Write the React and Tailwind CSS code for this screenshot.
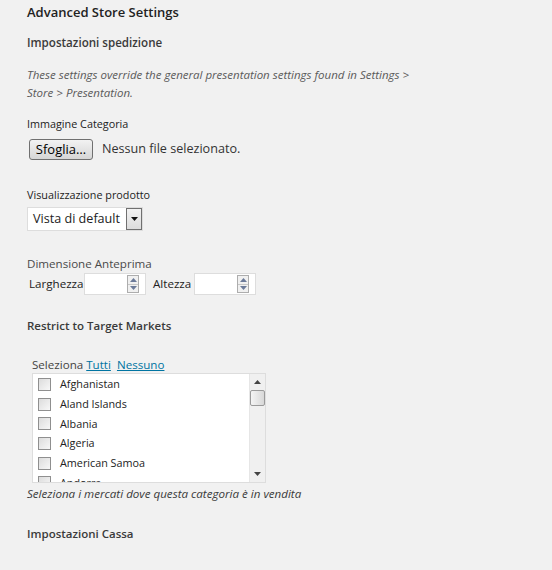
import React from 'react';

const countries = ['Afghanistan', 'Aland Islands', 'Albania', 'Algeria', 'American Samoa', 'Andorra'];

const Spinner = () => (
  <div className="flex flex-col w-[12px] h-[18px] border border-[#adadad] bg-[#f0f0f0]">
    <div className="flex-1 flex items-center justify-center border-b border-[#c8c8c8]">
      <svg width="7" height="4" viewBox="0 0 7 4"><path d="M0 4 L3.5 0 L7 4 Z" fill="#6b7a99" /></svg>
    </div>
    <div className="flex-1 flex items-center justify-center">
      <svg width="7" height="4" viewBox="0 0 7 4"><path d="M0 0 L3.5 4 L7 0 Z" fill="#6b7a99" /></svg>
    </div>
  </div>
);

const NumberBox = () => (
  <div className="w-[62px] h-[22px] bg-white border border-[#dddddd] flex items-center justify-end pr-[6px] shrink-0">
    <Spinner />
  </div>
);

const App = () => {
  return (
    <div className="w-[552px] h-[570px] bg-[#f1f1f1] pl-[27px] pt-[2px] text-[#444] overflow-hidden" style={{ fontFamily: '"Open Sans", sans-serif' }}>
      <h2 className="h-[20px] text-[13px] font-semibold text-[#222] leading-[20px]">Advanced Store Settings</h2>

      <h3 className="mt-[11px] h-[20px] text-[11.6px] font-semibold text-[#3a3a3a] leading-[20px]">Impostazioni spedizione</h3>
      <p className="mt-[13px] text-[11.5px] italic text-[#5a5a5a] leading-[18px] w-[395px]">
        These settings override the general presentation settings found in Settings &gt; Store &gt; Presentation.
      </p>

      <div className="mt-[14px] h-[16px] text-[10.8px] text-[#222] leading-[16px]">Immagine Categoria</div>
      <div className="mt-[7px] flex items-center h-[21px]">
        <div className="ml-[2px] w-[64px] h-[21px] rounded-[3px] border border-[#707070] bg-gradient-to-b from-[#f2f2f2] to-[#d6d6d6] flex items-center justify-center text-[13px] text-black whitespace-nowrap">Sfoglia…</div>
        <span className="ml-[9px] text-[12.6px] text-[#333] whitespace-nowrap">Nessun file selezionato.</span>
      </div>

      <div className="mt-[27px] h-[16px] text-[10.8px] text-[#222] leading-[16px]">Visualizzazione prodotto</div>
      <div className="mt-[4px] w-[116px] h-[24px] bg-white border border-[#dddddd] flex items-center">
        <span className="flex-1 pl-[5px] text-[12.6px] text-[#222] whitespace-nowrap">Vista di default</span>
        <div className="w-[16px] h-[22px] border border-[#707070] bg-gradient-to-b from-[#f2f2f2] to-[#dcdcdc] flex items-center justify-center">
          <svg width="7" height="4" viewBox="0 0 7 4"><path d="M0 0 L3.5 4 L7 0 Z" fill="#111" /></svg>
        </div>
      </div>

      <div className="mt-[24px] h-[18px] text-[11.6px] text-[#4a4a4a] leading-[18px]">Dimensione Anteprima</div>
      <div className="flex items-center h-[22px] text-[11.6px] text-[#222]">
        <span className="ml-[2px] w-[55px] whitespace-nowrap">Larghezza</span>
        <NumberBox />
        <span className="ml-[7px] w-[41px] whitespace-nowrap">Altezza</span>
        <NumberBox />
      </div>

      <h3 className="mt-[21px] h-[20px] text-[11.5px] font-semibold text-[#3a3a3a] leading-[20px]">Restrict to Target Markets</h3>

      <div className="mt-[21px] ml-[5px] h-[16px] text-[11.6px] text-[#444] leading-[16px] whitespace-nowrap">
        Seleziona <a className="text-[#0074a2] underline">Tutti</a>&nbsp; <a className="text-[#0074a2] underline">Nessuno</a>
      </div>
      <div className="ml-[5px] w-[234px] h-[110px] bg-white border border-[#dddddd] flex overflow-hidden">
        <div className="flex-1 pt-[0.5px]">
          {countries.map((c) => (
            <div key={c} className="flex items-center h-[19.7px]">
              <div className="ml-[5px] w-[13px] h-[13px] border border-[#8f8f8f] bg-gradient-to-br from-[#dcdcdc] to-[#f8f8f8] shrink-0" />
              <span className="ml-[9px] text-[10.8px] text-[#222] whitespace-nowrap">{c}</span>
            </div>
          ))}
        </div>
        <div className="w-[16px] h-full bg-[#f0f0f0] border-l border-[#e6e6e6] flex flex-col items-center">
          <div className="h-[16px] flex items-center justify-center">
            <svg width="7" height="4" viewBox="0 0 7 4"><path d="M0 4 L3.5 0 L7 4 Z" fill="#444" /></svg>
          </div>
          <div className="w-[15px] h-[16px] border border-[#9a9a9a] rounded-[2px] bg-gradient-to-r from-[#f4f4f4] to-[#d8d8d8]" />
          <div className="flex-1" />
          <div className="h-[16px] flex items-center justify-center">
            <svg width="7" height="4" viewBox="0 0 7 4"><path d="M0 0 L3.5 4 L7 0 Z" fill="#444" /></svg>
          </div>
        </div>
      </div>
      <p className="mt-[3px] h-[16px] text-[11.6px] italic text-[#3a3a3a] leading-[16px] whitespace-nowrap">Seleziona i mercati dove questa categoria è in vendita</p>

      <h3 className="mt-[22px] h-[20px] text-[11.5px] font-semibold text-[#3a3a3a] leading-[20px]">Impostazioni Cassa</h3>
    </div>
  );
};

export default App;
